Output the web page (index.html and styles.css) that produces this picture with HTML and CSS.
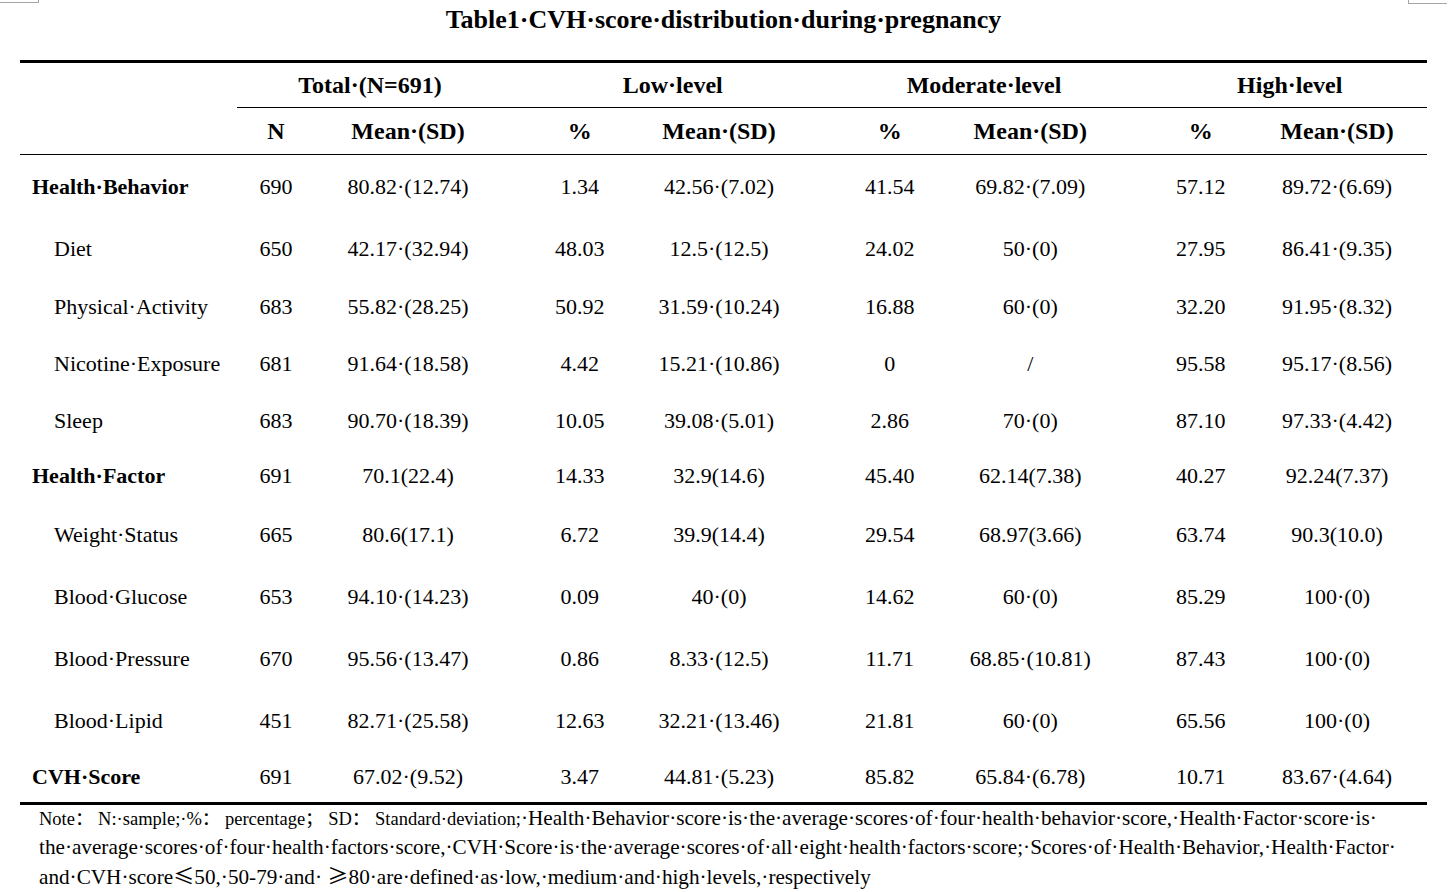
FILE: index.html
```html
<!DOCTYPE html>
<html lang="en">
<head>
<meta charset="utf-8">
<title>Table1 CVH score distribution during pregnancy</title>
<link rel="stylesheet" href="styles.css">
</head>
<body>
<div class="page">
  <div class="marks"><span class="mark mark-l"></span><span class="mark mark-r"></span></div>
  <h1 class="title">Table1·CVH·score·distribution·during·pregnancy</h1>
  <div class="table">
    <div class="row head1">
      <div class="cell"></div>
      <div class="cell grp g-total">Total·(N=691)</div>
      <div class="cell grp g-low">Low·level</div>
      <div class="cell grp g-mod">Moderate·level</div>
      <div class="cell grp g-high">High·level</div>
    </div>
    <div class="row head2 cols">
      <div class="cell"></div>
      <div class="cell">N</div>
      <div class="cell">Mean·(SD)</div>
      <div class="cell">%</div>
      <div class="cell">Mean·(SD)</div>
      <div class="cell">%</div>
      <div class="cell">Mean·(SD)</div>
      <div class="cell">%</div>
      <div class="cell">Mean·(SD)</div>
    </div>
    <div class="row data cols r1">
      <div class="cell label main">Health·Behavior</div>
      <div class="cell">690</div><div class="cell">80.82·(12.74)</div>
      <div class="cell">1.34</div><div class="cell">42.56·(7.02)</div>
      <div class="cell">41.54</div><div class="cell">69.82·(7.09)</div>
      <div class="cell">57.12</div><div class="cell">89.72·(6.69)</div>
    </div>
    <div class="row data cols r2">
      <div class="cell label sub">Diet</div>
      <div class="cell">650</div><div class="cell">42.17·(32.94)</div>
      <div class="cell">48.03</div><div class="cell">12.5·(12.5)</div>
      <div class="cell">24.02</div><div class="cell">50·(0)</div>
      <div class="cell">27.95</div><div class="cell">86.41·(9.35)</div>
    </div>
    <div class="row data cols r3">
      <div class="cell label sub">Physical·Activity</div>
      <div class="cell">683</div><div class="cell">55.82·(28.25)</div>
      <div class="cell">50.92</div><div class="cell">31.59·(10.24)</div>
      <div class="cell">16.88</div><div class="cell">60·(0)</div>
      <div class="cell">32.20</div><div class="cell">91.95·(8.32)</div>
    </div>
    <div class="row data cols r4">
      <div class="cell label sub">Nicotine·Exposure</div>
      <div class="cell">681</div><div class="cell">91.64·(18.58)</div>
      <div class="cell">4.42</div><div class="cell">15.21·(10.86)</div>
      <div class="cell">0</div><div class="cell">/</div>
      <div class="cell">95.58</div><div class="cell">95.17·(8.56)</div>
    </div>
    <div class="row data cols r5">
      <div class="cell label sub">Sleep</div>
      <div class="cell">683</div><div class="cell">90.70·(18.39)</div>
      <div class="cell">10.05</div><div class="cell">39.08·(5.01)</div>
      <div class="cell">2.86</div><div class="cell">70·(0)</div>
      <div class="cell">87.10</div><div class="cell">97.33·(4.42)</div>
    </div>
    <div class="row data cols r6">
      <div class="cell label main">Health·Factor</div>
      <div class="cell">691</div><div class="cell">70.1(22.4)</div>
      <div class="cell">14.33</div><div class="cell">32.9(14.6)</div>
      <div class="cell">45.40</div><div class="cell">62.14(7.38)</div>
      <div class="cell">40.27</div><div class="cell">92.24(7.37)</div>
    </div>
    <div class="row data cols r7">
      <div class="cell label sub">Weight·Status</div>
      <div class="cell">665</div><div class="cell">80.6(17.1)</div>
      <div class="cell">6.72</div><div class="cell">39.9(14.4)</div>
      <div class="cell">29.54</div><div class="cell">68.97(3.66)</div>
      <div class="cell">63.74</div><div class="cell">90.3(10.0)</div>
    </div>
    <div class="row data cols r8">
      <div class="cell label sub">Blood·Glucose</div>
      <div class="cell">653</div><div class="cell">94.10·(14.23)</div>
      <div class="cell">0.09</div><div class="cell">40·(0)</div>
      <div class="cell">14.62</div><div class="cell">60·(0)</div>
      <div class="cell">85.29</div><div class="cell">100·(0)</div>
    </div>
    <div class="row data cols r9">
      <div class="cell label sub">Blood·Pressure</div>
      <div class="cell">670</div><div class="cell">95.56·(13.47)</div>
      <div class="cell">0.86</div><div class="cell">8.33·(12.5)</div>
      <div class="cell">11.71</div><div class="cell">68.85·(10.81)</div>
      <div class="cell">87.43</div><div class="cell">100·(0)</div>
    </div>
    <div class="row data cols r10">
      <div class="cell label sub">Blood·Lipid</div>
      <div class="cell">451</div><div class="cell">82.71·(25.58)</div>
      <div class="cell">12.63</div><div class="cell">32.21·(13.46)</div>
      <div class="cell">21.81</div><div class="cell">60·(0)</div>
      <div class="cell">65.56</div><div class="cell">100·(0)</div>
    </div>
    <div class="row data cols r11">
      <div class="cell label main">CVH·Score</div>
      <div class="cell">691</div><div class="cell">67.02·(9.52)</div>
      <div class="cell">3.47</div><div class="cell">44.81·(5.23)</div>
      <div class="cell">85.82</div><div class="cell">65.84·(6.78)</div>
      <div class="cell">10.71</div><div class="cell">83.67·(4.64)</div>
    </div>
  </div>
  <p class="note"><span class="note-small">Note： N:·sample;·%： percentage； SD： Standard·deviation;</span>·Health·Behavior·score·is·the·average·scores·of·four·health·behavior·score,·Health·Factor·score·is·<br>the·average·scores·of·four·health·factors·score,·CVH·Score·is·the·average·scores·of·all·eight·health·factors·score;·Scores·of·Health·Behavior,·Health·Factor·<br>and·CVH·score<span class="cjk">≤</span>50,·50-79·and· <span class="cjk">≥</span>80·are·defined·as·low,·medium·and·high·levels,·respectively</p>
</div>
</body>
</html>
```

FILE: styles.css
```css
* {
  box-sizing: border-box;
}

html, body {
  margin: 0;
  padding: 0;
  background: #ffffff;
}

body {
  font-family: "Liberation Serif", "Noto Sans CJK SC", serif;
  color: #000000;
  width: 1453px;
  height: 892px;
  overflow: hidden;
}

.page {
  padding: 0 26px 0 20px;
}

.marks {
  display: flex;
  justify-content: space-between;
  height: 3px;
  margin: 0 -26px 0 -20px;
  padding-right: 6px;
}

.mark {
  display: block;
  height: 3px;
  border-bottom: 1px solid #a6a6a6;
}

.mark-l {
  width: 39px;
  border-right: 1px solid #a6a6a6;
}

.mark-r {
  width: 39px;
  border-left: 1px solid #a6a6a6;
  height: 4px;
}

.title {
  margin: 2px 0 25px;
  font-size: 26px;
  line-height: 30px;
  font-weight: bold;
  text-align: center;
}

.table {
  border-top: 3px solid #000;
  border-bottom: 3px solid #000;
}

.row {
  display: grid;
  grid-template-columns: 217px 105px 152px 155.5px 155px 155.5px 155.5px 153.5px 158px;
}

.cell {
  display: flex;
  align-items: center;
  justify-content: center;
  white-space: nowrap;
  font-size: 22px;
  line-height: 26px;
}

.head1 {
  height: 45px;
}

.head1 .cell,
.head2 .cell {
  font-size: 24px;
  font-weight: bold;
}

.grp {
  grid-column: span 2;
  border-bottom: 1px solid #000;
}

.g-total { padding-left: 9px; }
.g-low { padding-left: 47px; }
.g-mod { padding-left: 48px; }
.g-high { padding-left: 37px; }

.head2 {
  height: 47px;
  border-bottom: 1px solid #000;
}

.cols > .cell:nth-child(2) { padding-right: 27px; }
.cols > .cell:nth-child(3) { padding-right: 20px; }
.cols > .cell:nth-child(4) { padding-left: 16px; }
.cols > .cell:nth-child(5) { padding-right: 16px; }
.cols > .cell:nth-child(6) { padding-left: 15px; }
.cols > .cell:nth-child(7) { padding-right: 15px; }
.cols > .cell:nth-child(8) { padding-left: 17px; }
.cols > .cell:nth-child(9) { padding-right: 22px; }

.label {
  justify-content: flex-start;
}

.label.main {
  padding-left: 12px;
  font-weight: bold;
}

.label.sub {
  padding-left: 34px;
}

.r1 { height: 64px; }
.r2 { height: 60px; }
.r3 { height: 56px; }
.r4 { height: 58px; }
.r5 { height: 55px; }
.r6 { height: 56px; }
.r7 { height: 61px; }
.r8 { height: 63px; }
.r9 { height: 62px; }
.r10 { height: 62px; }
.r11 { height: 50px; }

.note {
  margin: 0;
  padding-left: 19px;
  font-size: 21.2px;
  line-height: 27.5px;
  white-space: nowrap;
}

.note-small {
  font-size: 18.5px;
}

.cjk {
  font-family: "Noto Sans CJK SC", sans-serif;
}
```
